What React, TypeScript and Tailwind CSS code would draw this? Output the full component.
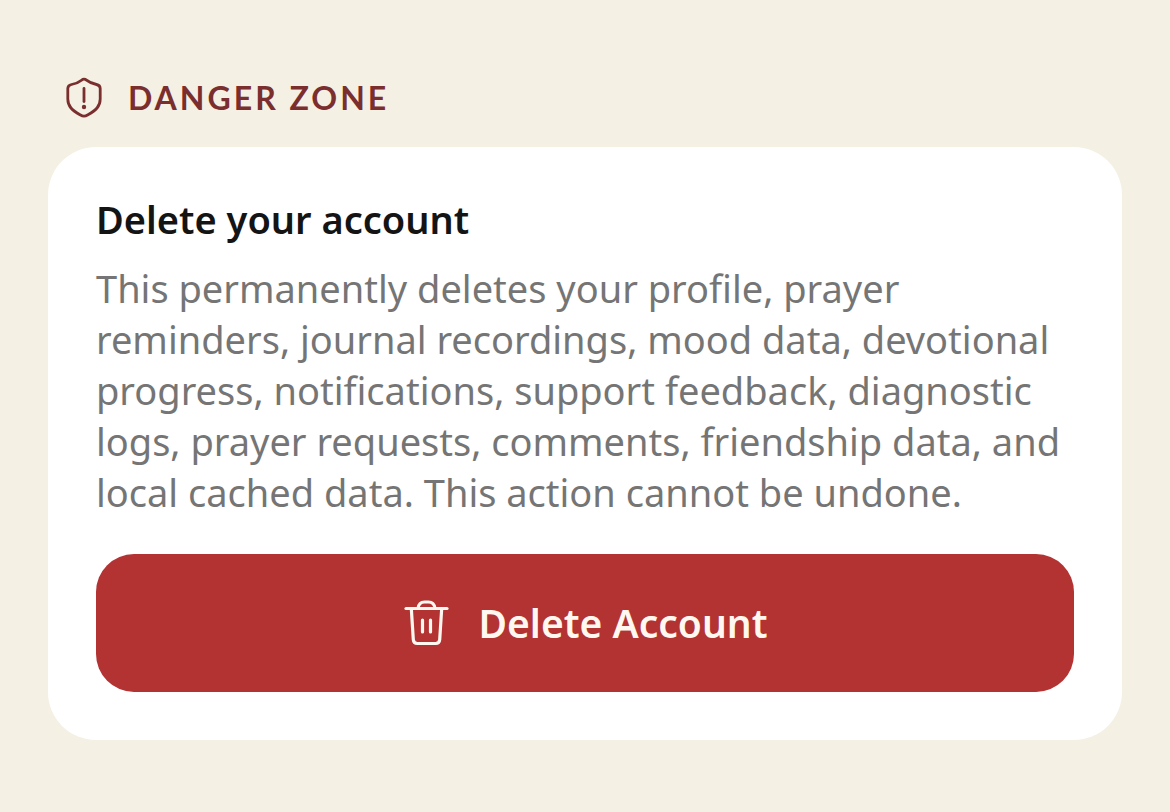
interface DangerCardProps {
  title: string;
  description: string;
  actionLabel: string;
}

function ShieldAlertIcon() {
  return (
    <svg viewBox="0 0 40 44" className="h-11 w-10 shrink-0" fill="none" aria-hidden="true">
      <path
        d="M20 3.2c-1 0-1.8.4-2.5 1C14.7 6.5 11 7.800 7.500 8.500 4.800 9 3.800 10.300 3.800 12.600V23c0 7.500 4.400 11.300 12.200 15.700 1.500.9 2.700 1.500 4 1.500s2.500-.6 4-1.500c7.800-4.400 12.200-8.200 12.200-15.700V12.600c0-2.300-1-3.600-3.700-4.100C29 7.800 25.300 6.500 22.500 4.200c-.7-.6-1.500-1-2.500-1Z"
        stroke="currentColor"
        strokeWidth="2.8"
        strokeLinejoin="round"
      />
      <path d="M20 12.5v13" stroke="currentColor" strokeWidth="2.8" strokeLinecap="round" />
      <circle cx="20" cy="31" r="2.2" fill="currentColor" />
    </svg>
  );
}

function TrashIcon() {
  return (
    <svg
      viewBox="0 0 48 48"
      className="size-12 shrink-0"
      fill="none"
      stroke="currentColor"
      strokeWidth="3.2"
      strokeLinecap="round"
      strokeLinejoin="round"
      aria-hidden="true"
    >
      <path d="M4 9.5h41" />
      <path d="M16 9.500c.5-4 2.700-6.500 6.500-6.500h4c3.800 0 6 2.500 6.500 6.500" />
      <path d="M9.300 9.500l2 31.200c.2 2.500 1.400 3.800 4 3.800h18.400c2.600 0 3.800-1.300 4-3.800l2-31.200" />
      <path d="M20.500 21v12M28.500 21v12" />
    </svg>
  );
}

function DangerCard({ title, description, actionLabel }: DangerCardProps) {
  return (
    <div className="rounded-[48px] bg-white p-12">
      <h3 className="text-[38px] leading-[48px] font-semibold text-[#141414]">{title}</h3>
      <p className="mt-5 text-[38px] leading-[51px] text-[#757575]">{description}</p>
      <button
        type="button"
        className="mt-9 flex w-full items-center justify-center gap-7 rounded-[38px] bg-[#b33232] py-11 text-[39px] leading-[50px] font-semibold text-[#fff8f0]"
      >
        <TrashIcon />
        {actionLabel}
      </button>
    </div>
  );
}

export default function App() {
  return (
    <main className="min-h-screen bg-[#f4f0e4] px-12 py-[72px] font-['Noto_Sans',sans-serif]">
      <section aria-labelledby="danger-zone">
        <div className="mb-6 flex items-center gap-6 px-4 text-[#7a2e2e]">
          <ShieldAlertIcon />
          <h2 id="danger-zone" className="font-[Lato,sans-serif] text-[32px] leading-[51px] font-bold tracking-[3px]">
            DANGER ZONE
          </h2>
        </div>
        <DangerCard
          title="Delete your account"
          description="This permanently deletes your profile, prayer reminders, journal recordings, mood data, devotional progress, notifications, support feedback, diagnostic logs, prayer requests, comments, friendship data, and local cached data. This action cannot be undone."
          actionLabel="Delete Account"
        />
      </section>
    </main>
  );
}
